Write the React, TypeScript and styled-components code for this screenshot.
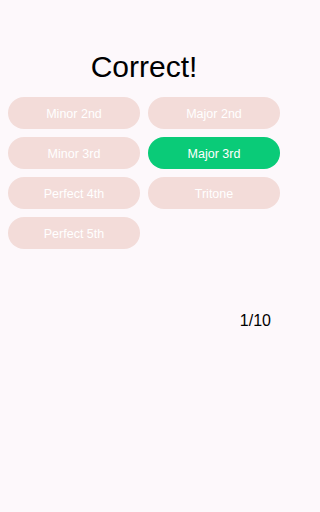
import styled, { createGlobalStyle } from "styled-components";

const GlobalStyle = createGlobalStyle`
  html, body {
    margin: 0;
    padding: 0;
    background: #fdf8fb;
  }
  body {
    font-family: "Liberation Sans", Arial, sans-serif;
  }
`;

const Page = styled.div`
  width: 288px;
  min-height: 512px;
  padding: 48px 8px 0;
  box-sizing: border-box;
`;

const Title = styled.h1`
  margin: 0 0 13px;
  height: 36px;
  line-height: 38px;
  text-align: center;
  font-size: 30px;
  font-weight: 400;
  color: #000;
`;

const Grid = styled.div`
  display: grid;
  grid-template-columns: 1fr 1fr;
  gap: 8px;
`;

const Choice = styled.button<{ $correct?: boolean }>`
  height: 32px;
  border: none;
  border-radius: 16px;
  background: ${(p) => (p.$correct ? "#0acb78" : "#f3dcd9")};
  color: #fff;
  font-family: inherit;
  font-size: 12.5px;
  padding: 2px 0 0;
`;

const Counter = styled.div`
  margin-top: 63px;
  padding-right: 9px;
  text-align: right;
  font-size: 16px;
  color: #000;
`;

const intervals = [
  "Minor 2nd",
  "Major 2nd",
  "Minor 3rd",
  "Major 3rd",
  "Perfect 4th",
  "Tritone",
  "Perfect 5th",
];

export default function App() {
  return (
    <>
      <GlobalStyle />
      <Page>
        <Title>Correct!</Title>
        <Grid>
          {intervals.map((name) => (
            <Choice key={name} $correct={name === "Major 3rd"}>
              {name}
            </Choice>
          ))}
        </Grid>
        <Counter>1/10</Counter>
      </Page>
    </>
  );
}
